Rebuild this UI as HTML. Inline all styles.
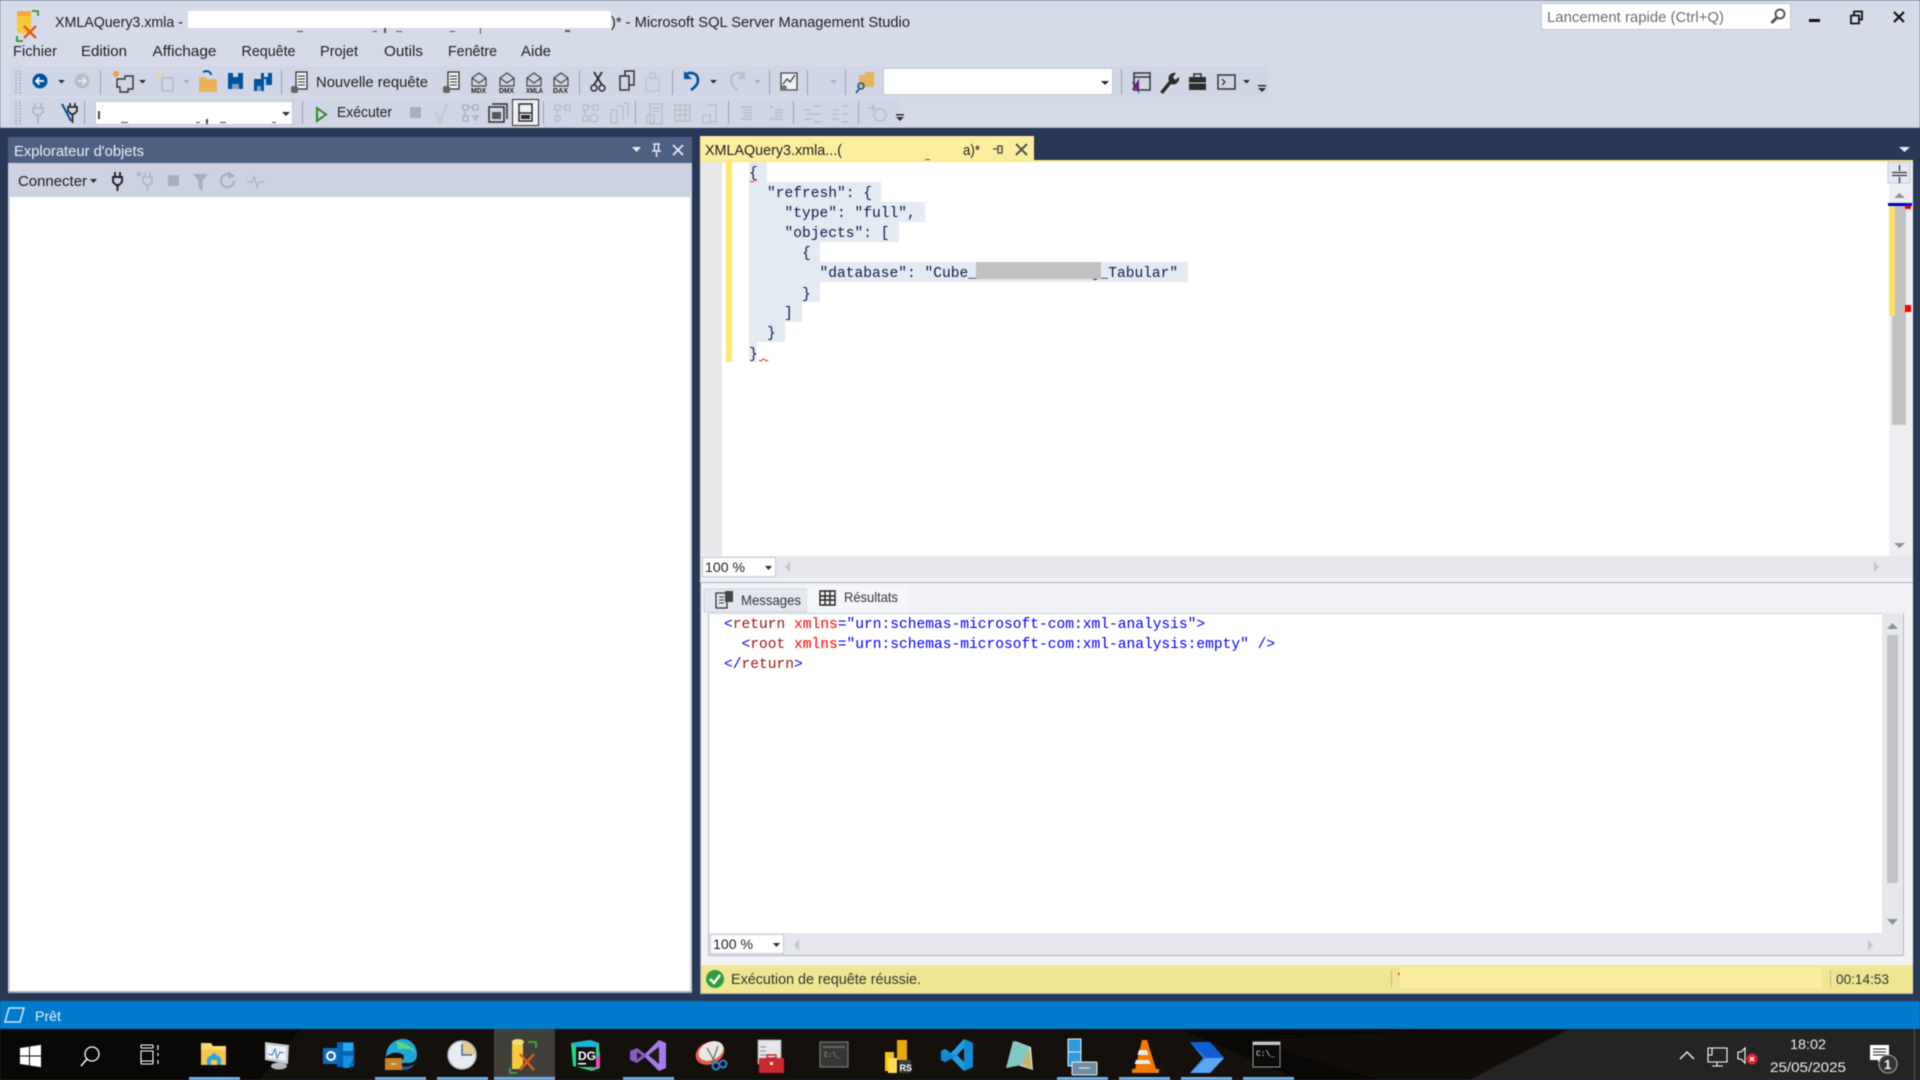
<!DOCTYPE html>
<html lang="fr"><head><meta charset="utf-8"><title>SSMS</title>
<style>
html,body{margin:0;padding:0;width:1920px;height:1080px;overflow:hidden;background:#293955}
#w{position:absolute;left:0;top:0;width:1920px;height:1080px;filter:blur(.45px)}
svg{display:block}
text{font-family:"Liberation Sans",sans-serif;font-size:15px;fill:#1e1e1e;white-space:pre}
.m{font-family:"Liberation Mono",monospace;font-size:14.58px;fill:#15154a}
.x{font-family:"Liberation Mono",monospace;font-size:14.58px;fill:#0000ff}
.g{fill:#a9aebb}.d{fill:#2c2c2c}
</style></head><body><div id="w">
<svg width="1920" height="1080" viewBox="0 0 1920 1080" xmlns="http://www.w3.org/2000/svg">
<!-- chrome -->
<rect width="1920" height="128" fill="#d6dbe9"/>
<rect width="1920" height="1" fill="#b9c1d2"/>
<rect y="127" width="1920" height="1" fill="#b4bccd"/>
<rect x="10" y="66" width="1258" height="30" fill="#d0d6e5"/>
<rect x="10" y="98" width="890" height="28" fill="#d0d6e5"/>
<rect y="128" width="1920" height="873" fill="#293955"/>
<!-- titlebar -->
<path d="M17 11h14v17l-4 5h-8a2 2 0 0 1-2-2z" fill="#f4c93c"/><path d="M17 11h14v5H17z" fill="#f6a93b"/>
<path d="M32 12h6v5M17 37v5h6" fill="none" stroke="#3e9e3e" stroke-width="2" transform="translate(0,-1)"/>
<path d="M24 26l12 12M36 26L24 38" stroke="#e35d12" stroke-width="2.600"/>
<text x="55" y="27" textLength="128" lengthAdjust="spacingAndGlyphs">XMLAQuery3.xmla -</text>
<rect x="188" y="11" width="423" height="17" fill="#fff"/>
<path d="M297 31h6v1h-6zM373 31h4v1h-4zM384 28h2v5h-2zM396 31h6v1h-6zM450 31h5v1h-5zM480 28h1v6h-1zM565 30h5v2h-5z" fill="#555"/>
<text x="611" y="27" textLength="299" lengthAdjust="spacingAndGlyphs">)* - Microsoft SQL Server Management Studio</text>
<rect x="1541.500" y="3.500" width="249" height="26" fill="#fff" stroke="#c3c9d8"/>
<text x="1547" y="22" textLength="177" lengthAdjust="spacingAndGlyphs" style="fill:#6d6d6d">Lancement rapide (Ctrl+Q)</text>
<circle cx="1780" cy="14" r="4.500" fill="none" stroke="#555" stroke-width="2"/><path d="M1776.500 18l-5 5" stroke="#555" stroke-width="3"/>
<rect x="1809" y="19" width="11" height="3" fill="#111"/>
<path d="M1851 15.500h8v8h-8zM1854 15v-3.500h8v8h-3" fill="none" stroke="#111" stroke-width="1.800"/>
<path d="M1894 12l10 10M1904 12l-10 10" stroke="#111" stroke-width="2.200"/>
<!-- menu -->
<text x="13" y="56" textLength="44" lengthAdjust="spacingAndGlyphs">Fichier</text>
<text x="81" y="56" textLength="46" lengthAdjust="spacingAndGlyphs">Edition</text>
<text x="152.500" y="56" textLength="64" lengthAdjust="spacingAndGlyphs">Affichage</text>
<text x="241.500" y="56" textLength="54" lengthAdjust="spacingAndGlyphs">Requête</text>
<text x="320" y="56" textLength="38" lengthAdjust="spacingAndGlyphs">Projet</text>
<text x="384" y="56" textLength="39" lengthAdjust="spacingAndGlyphs">Outils</text>
<text x="448" y="56" textLength="49" lengthAdjust="spacingAndGlyphs">Fenêtre</text>
<text x="521" y="56" textLength="30" lengthAdjust="spacingAndGlyphs">Aide</text>
<!-- toolbar 1 -->
<g fill="none" stroke="#9aa2b5" stroke-width="1.500" stroke-dasharray="1.500 1.500"><path d="M16 71v23M20 71v23M16 102v23M20 102v23"/></g>
<circle cx="40" cy="81" r="7.500" fill="#00539c"/><path d="M44 81h-7M39.500 77.500L36 81l3.500 3.500" fill="none" stroke="#fff" stroke-width="1.800"/>
<path class="d" d="M58 80h7l-3.500 3.500z"/>
<circle cx="82" cy="81" r="7.500" fill="#b9bdc8"/><path d="M78 81h7M82.500 77.500L86 81l-3.500 3.500" fill="none" stroke="#e6e8ee" stroke-width="1.800"/>
<rect x="100" y="70" width="1" height="25" fill="#9aa2b5"/>
<path d="M117 79h8v-3h8v13h-5v3h-8v-5h-3z" fill="none" stroke="#333" stroke-width="1.400"/><circle cx="116" cy="74" r="3" fill="#e8a33c"/>
<path class="d" d="M139 80h7l-3.500 3.500z"/>
<path d="M162 78h11v13h-11z" fill="none" stroke="#b4b9c6" stroke-width="1.500"/><circle cx="159" cy="75" r="3" fill="#e6d5ae"/>
<path class="g" d="M183 80h7l-3.500 3.500z"/>
<path d="M199 77h6l2 2h10v13h-18z" fill="#e9b35b"/><path d="M203 72c5-2 8 0 8 3" fill="none" stroke="#00539c" stroke-width="2"/>
<path d="M228 73h15v16h-15z" fill="#00539c"/><rect x="233" y="73" width="5" height="4" fill="#d6dbe9"/><rect x="232" y="84" width="7" height="5" fill="#7ea2c6"/>
<path d="M254 79h10v12h-10zM261 73h11v12h-6v-6h-5z" fill="#00539c"/><rect x="264" y="73" width="4" height="4" fill="#d6dbe9"/><rect x="257" y="86" width="4" height="5" fill="#7ea2c6"/>
<rect x="281" y="70" width="1" height="25" fill="#9aa2b5"/>
<g><path d="M296 72h11v17h-11z" fill="#f2f3f6" stroke="#333" stroke-width="1.300"/><path d="M298 76h7M298 79h7M298 82h7M298 85h7" stroke="#333"/><rect x="291" y="86" width="7" height="7" rx="2" fill="#666"/></g>
<text x="316" y="87" textLength="112" lengthAdjust="spacingAndGlyphs">Nouvelle requête</text>
<g transform="translate(152,0)"><path d="M296 72h11v17h-11z" fill="#f2f3f6" stroke="#333" stroke-width="1.300"/><path d="M298 76h7M298 79h7M298 82h7M298 85h7" stroke="#333"/><rect x="291" y="86" width="7" height="7" rx="2" fill="#666"/></g>
<g fill="none" stroke="#444" stroke-width="1.200"><path d="M472 78l7-5 7 5v8h-14zM472 78l7 5 7-5"/><path d="M500 78l7-5 7 5v8h-14zM500 78l7 5 7-5"/><path d="M527 78l7-5 7 5v8h-14zM527 78l7 5 7-5"/><path d="M554 78l7-5 7 5v8h-14zM554 78l7 5 7-5"/></g>
<g><text x="471" y="93" textLength="15" lengthAdjust="spacingAndGlyphs" style="font-size:7px;font-weight:bold">MDX</text><text x="499" y="93" textLength="15" lengthAdjust="spacingAndGlyphs" style="font-size:7px;font-weight:bold">DMX</text><text x="526" y="93" textLength="17" lengthAdjust="spacingAndGlyphs" style="font-size:7px;font-weight:bold">XMLA</text><text x="553" y="93" textLength="15" lengthAdjust="spacingAndGlyphs" style="font-size:7px;font-weight:bold">DAX</text></g>
<rect x="579" y="70" width="1" height="25" fill="#9aa2b5"/>
<path d="M594 72l8 13M602 72l-8 13" stroke="#2c2c2c" stroke-width="1.800"/><circle cx="594" cy="88" r="3" fill="none" stroke="#2c2c2c" stroke-width="1.500"/><circle cx="602" cy="88" r="3" fill="none" stroke="#2c2c2c" stroke-width="1.500"/>
<path d="M620 76h9v14h-9zM625 76v-5h9v14h-5" fill="none" stroke="#333" stroke-width="1.500"/>
<path d="M646 78h13v13h-13zM650 78v-5h5v5" fill="none" stroke="#c0c4cf" stroke-width="1.500"/>
<rect x="672" y="70" width="1" height="25" fill="#9aa2b5"/>
<path d="M685 75c5-4 13-2 13 5 0 5-4 8-7 10" fill="none" stroke="#00539c" stroke-width="2.600"/><path d="M684 71v8h8z" fill="#00539c"/>
<path class="d" d="M710 80h7l-3.500 3.500z"/>
<path d="M744 75c-5-4-13-2-13 5 0 5 4 8 7 10" fill="none" stroke="#bcc0cb" stroke-width="2.600"/><path d="M745 71v8h-8z" fill="#bcc0cb"/>
<path class="g" d="M754 80h7l-3.500 3.500z"/>
<rect x="769" y="70" width="1" height="25" fill="#9aa2b5"/>
<path d="M781 73h16v17h-16z" fill="#eef0f5" stroke="#444" stroke-width="1.300"/><path d="M783 84l4-5 3 3 5-7" fill="none" stroke="#444" stroke-width="1.300"/><circle cx="784" cy="88" r="3" fill="#777"/>
<rect x="807" y="70" width="1" height="25" fill="#9aa2b5"/>
<path class="g" d="M830 80h7l-3.500 3.500z"/>
<rect x="845" y="70" width="1" height="25" fill="#9aa2b5"/>
<path d="M859 75h6v-3h9v15h-15z" fill="#e9b35b"/><circle cx="861" cy="86" r="3" fill="none" stroke="#00539c" stroke-width="1.500"/><path d="M859 89l-3 4" stroke="#00539c" stroke-width="1.600"/>
<rect x="883.500" y="68.500" width="229" height="26" fill="#fff" stroke="#c3c9d8"/>
<path class="d" d="M1101 81h8l-4 4z"/>
<rect x="1121" y="69" width="1" height="26" fill="#9aa2b5"/>
<path d="M1134 73h16v17h-16zM1134 77h16" fill="none" stroke="#333" stroke-width="1.500"/><path d="M1133 82l5 8v-8l-5 8" fill="none" stroke="#68217a" stroke-width="2.200"/>
<path d="M1160 92l9-11c-2-5 2-9 7-8l-3 4 2 3 4-3c1 5-4 9-8 7l-8 10z" fill="#2c2c2c"/>
<path d="M1189 77h17v13h-17z" fill="#2c2c2c"/><path d="M1194 77v-3h7v3" fill="none" stroke="#2c2c2c" stroke-width="1.500"/><path d="M1189 83h17" stroke="#d0d6e5"/>
<path d="M1218 75h17v14h-17z" fill="none" stroke="#333" stroke-width="1.500"/><path d="M1222 79l3 3-3 3" fill="none" stroke="#333" stroke-width="1.300"/>
<path class="d" d="M1243 80h7l-3.500 3.500z"/>
<path class="d" d="M1258 85h8v1.500h-8zM1258 88h8l-4 4z"/>
<!-- toolbar 2 -->
<path d="M35 103v5M41 103v5M33 108h10v4l-3 3h-4l-3-3zM38 115v9" fill="none" stroke="#b0b5c2" stroke-width="1.800"/>
<path d="M62 104l9 17" stroke="#00539c" stroke-width="2"/><path d="M70 103v4M75 103v4M68 107h9v4l-3 3h-3l-3-3zM72.500 114v9" fill="none" stroke="#2c2c2c" stroke-width="1.800"/>
<rect x="84" y="101" width="1" height="23" fill="#9aa2b5"/>
<rect x="95.500" y="101.500" width="197" height="23" fill="#fff" stroke="#c3c9d8"/>
<path d="M98 111h2v8h-2zM121 122h7v1h-7zM196 122h4v1h-4zM206 119h2v5h-2zM220 122h6v1h-6zM272 122h4v1h-4z" fill="#444"/>
<path class="d" d="M282 112h8l-4 4z"/>
<rect x="302" y="101" width="1" height="23" fill="#9aa2b5"/>
<path d="M317 108l9 6.500-9 6.500z" fill="none" stroke="#2e8b2e" stroke-width="2"/>
<text x="337" y="117" textLength="55" lengthAdjust="spacingAndGlyphs">Exécuter</text>
<rect x="410" y="107" width="11" height="11" fill="#a9aebb"/>
<path d="M435 112l5 9 7-17" fill="none" stroke="#c4c8d2" stroke-width="2.600"/>
<g fill="none" stroke="#a9aebb" stroke-width="1.300"><path d="M463 105h5v5h-5zM473 105h5v5h-5zM463 116h5v5h-5zM468 107h5M465 110v6"/><path d="M473 116h5l-2.500 4z"/></g>
<path d="M489 107h15v15h-15zM492 104h15v15" fill="#d0d6e5" stroke="#2c2c2c" stroke-width="1.500"/><path d="M492 112h9v7h-9z" fill="#2c2c2c" opacity=".75"/>
<rect x="512.500" y="99.500" width="26" height="26" fill="#eef0f5" stroke="#2c2c2c"/>
<path d="M519 104h13v17h-13zM519 113h13" fill="none" stroke="#2c2c2c" stroke-width="1.500"/><path d="M521 115h9v4h-9z" fill="#2c2c2c"/>
<rect x="543" y="101" width="1" height="23" fill="#9aa2b5"/>
<g fill="none" stroke="#b9bdc8" stroke-width="1.300"><path d="M555 105h5v5h-5zM565 105h5v5h-5zM555 116h5v5h-5zM560 107h5M557 110v6"/><path d="M583 105h5v5h-5zM593 105h5v5h-5zM583 116h5v5h-5zM588 107h5M585 110v6"/><circle cx="594" cy="118" r="4"/><path d="M611 110h6v13h-6zM617 106h6v14M623 103h5v14"/></g>
<rect x="635" y="101" width="1" height="23" fill="#9aa2b5"/>
<g fill="none" stroke="#b9bdc8" stroke-width="1.300"><path d="M650 104h12v20h-12zM647 115h7v8h-7zM652 108h8M652 111h8"/><path d="M675 105h15v16h-15zM675 110h15M675 115h15M680 105v16M685 105v16"/><path d="M703 115h7v8h-7zM707 105h9v17h-6M712 105v-1"/></g>
<rect x="728" y="101" width="1" height="23" fill="#9aa2b5"/>
<g stroke="#b9bdc8" stroke-width="1.400" fill="none"><path d="M741 107h11M743 110h9M743 113h9M743 116h9M741 119h11"/><path d="M770 107h3M775 110h8M775 113h8M775 116h8M770 119h13"/></g>
<rect x="793" y="101" width="1" height="23" fill="#9aa2b5"/>
<g stroke="#b9bdc8" stroke-width="1.400" fill="none"><path d="M804 110h7M804 119h7M814 106h7M814 114h7M814 122h7M811 114h7M806 114h5"/><path d="M832 110h7M832 119h7M842 106h7M842 114h7M842 122h7M832 114h6"/></g>
<rect x="858" y="101" width="1" height="23" fill="#9aa2b5"/>
<circle cx="880" cy="115" r="6" fill="none" stroke="#b9bdc8" stroke-width="1.500"/><path d="M868 108h7M872 105l3 3-3 3" fill="none" stroke="#b9bdc8" stroke-width="1.500"/>
<path class="d" d="M896 114h8v1.500h-8zM896 117h8l-4 4z"/>
<!-- object explorer -->
<rect x="8" y="137" width="684" height="26" fill="#4d6082"/>
<rect x="8" y="163" width="684" height="34" fill="#ccd2e2"/>
<rect x="8" y="197" width="684" height="794" fill="#fff"/>
<rect x="8" y="991" width="684" height="2" fill="#a9b1c4"/>
<rect x="8" y="197" width="2" height="794" fill="#ccd2e2"/>
<rect x="690" y="197" width="2" height="794" fill="#ccd2e2"/>
<text x="14" y="156" textLength="130" lengthAdjust="spacingAndGlyphs" style="fill:#eef1f6">Explorateur d'objets</text>
<path d="M632 147h9l-4.500 5z" fill="#e8ecf4"/>
<path d="M653 144h7M654.500 144v7M658.500 144v7M652 151h9M656.500 151v6" stroke="#e8ecf4" stroke-width="1.400" fill="none"/>
<path d="M673 145l10 10M683 145l-10 10" stroke="#e8ecf4" stroke-width="1.700"/>
<text x="18" y="186" textLength="69" lengthAdjust="spacingAndGlyphs">Connecter</text>
<path class="d" d="M90 179h7l-3.500 4z"/>
<path d="M115 172v5M120 172v5M113 177h9v5l-3 3h-3l-3-3zM117.500 185v6" fill="none" stroke="#222" stroke-width="1.900"/>
<path d="M137 172l4 4M141 172l-4 4M145 172v5M150 172v5M143 177h9v5l-3 3h-3l-3-3zM147.500 185v6" fill="none" stroke="#b0b5c2" stroke-width="1.700"/>
<rect x="168" y="175" width="11" height="11" fill="#a9aebb"/>
<path class="g" d="M193 174h15l-5.500 7v10l-4-3v-7z"/>
<path d="M232 176a6.500 6.500 0 1 0 2 5" fill="none" stroke="#a9aebb" stroke-width="2.200"/><path class="g" d="M228 171l7 5-7 3z"/>
<path d="M247 182h5l2-5 3 10 2-5h5" fill="none" stroke="#b0b5c2" stroke-width="1.400"/>
<!-- editor tab strip -->
<rect x="700" y="136" width="334" height="24" fill="#fdee9f"/>
<rect x="700" y="160" width="1213" height="2" fill="#fbe98b"/>
<text x="705" y="155" textLength="137" lengthAdjust="spacingAndGlyphs">XMLAQuery3.xmla...(</text>
<text x="963" y="155" textLength="17" lengthAdjust="spacingAndGlyphs">a)*</text>
<path d="M925 159h5v1h-5z" fill="#555"/>
<path d="M993 149h5M998 146v7h4v-7zM1002 149h1" stroke="#444" stroke-width="1.300" fill="none"/>
<path d="M1016 144l11 11M1027 144l-11 11" stroke="#555" stroke-width="2"/>
<path d="M1899 147h11l-5.500 5z" fill="#e8ecf4"/>
<!-- editor -->
<rect x="700" y="162" width="1213" height="394" fill="#fff"/>
<rect x="700" y="162" width="22" height="394" fill="#e8e8ea"/>
<rect x="726" y="162" width="6" height="200" fill="#fbe96e"/>
<g fill="#e4eaf2"><rect x="749" y="162" width="18" height="20"/><rect x="749" y="182" width="132" height="20"/><rect x="749" y="202" width="176" height="20"/><rect x="749" y="222" width="150" height="20"/><rect x="749" y="242" width="71" height="20"/><rect x="749" y="262" width="439" height="20"/><rect x="749" y="282" width="71" height="20"/><rect x="749" y="302" width="53" height="20"/><rect x="749" y="322" width="36" height="20"/><rect x="749" y="342" width="8" height="20"/></g>
<text class="m" x="749" y="177">{</text>
<text class="m" x="767" y="197">"refresh": {</text>
<text class="m" x="784.500" y="217">"type": "full",</text>
<text class="m" x="784.500" y="237">"objects": [</text>
<text class="m" x="802" y="257">{</text>
<text class="m" x="819.500" y="277">"database": "Cube_xxxx_xxxxxxxxg_Tabular"</text>
<text class="m" x="802" y="298">}</text>
<text class="m" x="784" y="317">]</text>
<text class="m" x="767" y="337">}</text>
<text class="m" x="749" y="358">}</text>
<rect x="976" y="262" width="125" height="17" fill="#c1c1c1"/>
<path d="M750 181q2 2 4 0t3 0" fill="none" stroke="#e8483c" stroke-width="1.200"/>
<path d="M759 360q2 2 3 0t3 0t3 0" fill="none" stroke="#e8483c" stroke-width="1.200"/>
<!-- editor scrollbar -->
<rect x="1889" y="162" width="24" height="394" fill="#eeeef2"/>
<rect x="1888" y="162" width="22" height="21" fill="#e4e8f2" stroke="#c6ccda" stroke-width="1"/>
<path d="M1892 172.500h15M1892 175.500h15M1899.500 165v6M1899.500 177v6" stroke="#333" stroke-width="1.300"/>
<path d="M1894 198l5.500-5 5.500 5z" fill="#8d919b"/>
<rect x="1892" y="206" width="14" height="219" fill="#c2c2c2"/>
<rect x="1889" y="206" width="6" height="110" fill="#fbe06a"/>
<rect x="1888" y="203" width="24" height="3" fill="#0000c8"/>
<rect x="1905" y="206" width="6" height="3" fill="#f00"/>
<rect x="1905" y="305" width="6" height="7" fill="#f00"/>
<path d="M1894 543l5.500 5 5.500-5z" fill="#8d919b"/>
<!-- editor hscroll -->
<rect x="700" y="556" width="1213" height="22" fill="#e6e7ed"/>
<rect x="702.500" y="557.500" width="73" height="19" fill="#fff" stroke="#c3c9d8"/>
<text x="705" y="572" textLength="40" lengthAdjust="spacingAndGlyphs" style="font-size:14px">100 %</text>
<path class="d" d="M765 566h7l-3.500 4z"/>
<path d="M790 561l-5 6 5 6z" fill="#c4c7d0"/>
<path d="M1874 561l5 6-5 6z" fill="#c4c7d0"/>
<rect x="700" y="578" width="1213" height="5" fill="#f0f1f4"/>
<rect x="700" y="582" width="1213" height="1" fill="#a9aebc"/>
<!-- results pane -->
<rect x="700" y="583" width="1213" height="382" fill="#f1f2f6"/>
<rect x="704" y="589" width="103" height="23" fill="#e4e7ef" stroke="#cfd3de"/>
<rect x="807" y="586" width="102" height="27" fill="#f5f6f9"/>
<path d="M716 593h11v15h-11z" fill="none" stroke="#333" stroke-width="1.300"/><path d="M719 597h5M719 600h5M719 603h5" stroke="#333"/><rect x="725" y="591" width="8" height="11" fill="#444"/>
<text x="741" y="605" textLength="60" lengthAdjust="spacingAndGlyphs" style="font-size:14px;fill:#333">Messages</text>
<path d="M820 591h15v14h-15zM820 596h15M820 600h15M825 591v14M830 591v14" fill="none" stroke="#222" stroke-width="1.400"/>
<text x="844" y="602" textLength="54" lengthAdjust="spacingAndGlyphs" style="font-size:14px;fill:#333">Résultats</text>
<rect x="709" y="613" width="1173" height="320" fill="#fff"/>
<rect x="708" y="613" width="1" height="342" fill="#b4b9c8"/>
<rect x="708" y="613" width="1195" height="1" fill="#cdd1dc"/>
<text class="x" x="724" y="628">&lt;<tspan style="fill:#a31515">return</tspan> <tspan style="fill:#ff0000">xmlns</tspan>="urn:schemas-microsoft-com:xml-analysis"&gt;</text>
<text class="x" x="741.500" y="648">&lt;<tspan style="fill:#a31515">root</tspan> <tspan style="fill:#ff0000">xmlns</tspan>="urn:schemas-microsoft-com:xml-analysis:empty" /&gt;</text>
<text class="x" x="724" y="668">&lt;/<tspan style="fill:#a31515">return</tspan>&gt;</text>
<!-- results scrollbars -->
<rect x="1882" y="613" width="21" height="342" fill="#e6e7ed"/>
<path d="M1887 629l5.500-6 5.500 6z" fill="#8d919b"/>
<rect x="1887" y="635" width="11" height="248" fill="#c2c3c9"/>
<path d="M1887 919l5.500 6 5.500-6z" fill="#8d919b"/>
<rect x="709" y="933" width="1194" height="22" fill="#e6e7ed"/>
<rect x="710.500" y="934.500" width="73" height="19" fill="#fff" stroke="#c3c9d8"/>
<text x="713" y="949" textLength="40" lengthAdjust="spacingAndGlyphs" style="font-size:14px">100 %</text>
<path class="d" d="M773 943h7l-3.500 4z"/>
<path d="M799 939l-5 6 5 6z" fill="#c4c7d0"/>
<path d="M1868 939l5 6-5 6z" fill="#c4c7d0"/>
<rect x="708" y="955" width="1195" height="1" fill="#a9aebc"/>
<rect x="1903" y="613" width="1" height="343" fill="#b4b9c8"/>
<!-- exec status -->
<rect x="700" y="965" width="1213" height="28" fill="#efe592"/>
<rect x="700" y="993" width="1213" height="1" fill="#b5b8c4"/>
<rect x="700" y="583" width="1" height="410" fill="#8c97ad"/>
<circle cx="715" cy="979" r="9" fill="#2f9e41"/><path d="M710 979l4 4 6-8" fill="none" stroke="#fff" stroke-width="2.400"/>
<text x="731" y="984" textLength="190" lengthAdjust="spacingAndGlyphs" style="font-size:14.500px;fill:#333">Exécution de requête réussie.</text>
<rect x="1400" y="968" width="422" height="20" fill="#fbeba1"/>
<rect x="1391" y="970" width="1" height="17" fill="#b9b8a0"/><rect x="1830" y="970" width="1" height="17" fill="#b9b8a0"/>
<rect x="1398" y="973" width="1.500" height="2" fill="#b33"/>
<text x="1836" y="984" textLength="53" lengthAdjust="spacingAndGlyphs" style="font-size:14px;fill:#333">00:14:53</text>
<!-- status bar -->
<rect y="1001" width="1920" height="28" fill="#007acc"/>
<path d="M9 1008h15l-4 14H5z" fill="none" stroke="#cfe6f6" stroke-width="1.500"/>
<text x="35" y="1021" textLength="26" lengthAdjust="spacingAndGlyphs" style="fill:#e4f2fb;font-size:14px">Prêt</text>
<!-- taskbar -->
<rect y="1029" width="1920" height="51" fill="#242424"/>
<path d="M0 1029h1569l-100 51H0z" fill="#0a0806"/>
<path d="M300 1029h880l120 51H260z" fill="#14100b"/>
<path d="M1250 1040l200-11h119l-100 51h-90z" fill="#110d09"/>
<rect x="494" y="1029" width="61" height="51" fill="#413f3a"/>
<g fill="#70b3ea"><rect x="189" y="1077" width="51" height="3"/><rect x="375" y="1077" width="51" height="3"/><rect x="437" y="1077" width="51" height="3"/><rect x="494" y="1077" width="61" height="3"/><rect x="623" y="1077" width="51" height="3"/><rect x="1057" y="1077" width="51" height="3"/><rect x="1119" y="1077" width="51" height="3"/><rect x="1181" y="1077" width="51" height="3"/><rect x="1243" y="1077" width="51" height="3"/></g>
<path d="M20 1048l9-1.300v8.800h-9zM30 1046.500l11-1.600v10.600H30zM20 1056.500h9v8.800l-9-1.300zM30 1056.500h11v10.600l-11-1.600z" fill="#fff"/>
<circle cx="92" cy="1054" r="7" fill="none" stroke="#fff" stroke-width="1.300"/><path d="M87 1059l-6 7" stroke="#fff" stroke-width="1.400"/>
<path d="M141 1045h12M141 1048h12M141 1051h12v10h-12zM141 1064h12M141 1060v4M153 1060v4M141 1045v3M153 1045v3M158 1045v5M158 1053v3M158 1060v4" fill="none" stroke="#fff" stroke-width="1.100"/>
<path d="M201 1043h10l2 3h13v19h-25z" fill="#fcd96b"/><path d="M201 1050h25v15h-25z" fill="#f6c64b"/><path d="M207 1065v-7l7-5 7 5v7h-4v-5h-6v5z" fill="#2ca4e0"/>
<path d="M265 1042l24 3-1 19-23-4z" fill="#c9cbcf"/><path d="M267 1045l19 2v14l-19-3z" fill="#eef2f6"/><path d="M268 1054l4 1 3-6 2 9 3-6 4 1" fill="none" stroke="#3a7ab8" stroke-width="1"/><ellipse cx="279" cy="1066" rx="8" ry="3.500" fill="#b5b7bb"/>
<rect x="337" y="1042" width="17" height="25" fill="#0364b8"/><rect x="343" y="1043" width="10" height="8" fill="#28a8ea"/><path d="M343 1056h11l-5 12h-6z" fill="#1490df"/><rect x="323" y="1048" width="16" height="16" fill="#0f6cbd"/><circle cx="331" cy="1056" r="4" fill="none" stroke="#fff" stroke-width="2"/>
<path d="M386 1057c0-13 10-18 17-18 9 0 14 8 14 16 0 5-4 8-8 8h-10c3-2 5-4 5-7-1-3-12-6-18 1z" fill="#1ea7d8"/><path d="M396 1041c6 1 18 5 20 13-3-5-12-7-17-4z" fill="#5bd37c"/><rect x="385" y="1058" width="17" height="12" fill="#c8802a"/><rect x="391" y="1063" width="5" height="2" fill="#f2c46a"/><path d="M402 1070c6 0 10-2 13-6-6 3-9 3-13 2z" fill="#1463a8"/>
<circle cx="462" cy="1055" r="14" fill="#e8ecf1"/><path d="M462 1055v-14a14 14 0 0 1 14 14z" fill="#e6c98c"/><circle cx="462" cy="1055" r="14" fill="none" stroke="#b6bcc6" stroke-width="1.500"/><path d="M462 1044v11h10" fill="none" stroke="#3d6fb0" stroke-width="1.500"/>
<path d="M512 1042h11v22l-4 5h-7z" fill="#f4c93c"/><path d="M512 1042a6 3 0 0 1 12 0 6 3 0 0 1-12 0" fill="#f7dc7a"/>
<path d="M528 1042h8v6M510 1068v5h7" fill="none" stroke="#3e9e3e" stroke-width="2"/>
<path d="M520 1054l14 16M534 1054l-14 16" stroke="#e35d12" stroke-width="2.400"/>
<path d="M571 1043l19-3 9 3 1 25-8 3-19-5z" fill="#21d789"/><path d="M571 1043l19-3 9 3-8 14z" fill="#1ab3d6"/><path d="M590 1070l10-4v-14z" fill="#ee4bc0"/><rect x="576" y="1047" width="20" height="20" fill="#111"/>
<text x="578" y="1060" style="fill:#fff;font-size:12px;font-weight:bold">DG</text><rect x="578" y="1063" width="8" height="1.500" fill="#fff"/>
<path d="M637 1048l8 6 14-14 7 3v25l-7 3-14-14-8 6-7-3v-9z" fill="#865ac9"/><path d="M659 1047v17l-11-8.500zM637 1052l5 3.500-5 4z" fill="#1b1b1b"/><path d="M645 1054l14-14 7 3v25l-7 3-14-14 3-2 11 9v-18l-11 9z" fill="#a97be6"/>
<ellipse cx="710" cy="1053" rx="15" ry="11" transform="rotate(-25 710 1053)" fill="#e85a50"/><ellipse cx="711" cy="1051" rx="13" ry="9" transform="rotate(-25 711 1051)" fill="#e7e7e4"/><path d="M707 1048l8 14M718 1046l-6 17" stroke="#666" stroke-width="1.200"/><circle cx="716" cy="1066" r="3.500" fill="none" stroke="#3282d2" stroke-width="2"/><circle cx="723" cy="1064" r="3.500" fill="none" stroke="#3282d2" stroke-width="2"/>
<rect x="758" y="1040" width="23" height="24" fill="#e4e6ea" stroke="#999"/><path d="M760 1047h6M760 1051h6M760 1055h6" stroke="#888"/><rect x="759" y="1058" width="25" height="15" rx="1" fill="#c9292d"/><rect x="767" y="1055" width="9" height="3" fill="none" stroke="#c9292d" stroke-width="1.500"/><rect x="770" y="1062" width="3" height="3" fill="#eee"/>
<rect x="820" y="1042" width="28" height="25" fill="#363636" stroke="#777" stroke-width="1.200"/><path d="M823 1047h22" stroke="#666" stroke-width="2"/><text x="824" y="1057" style="fill:#aaa;font-size:7px;font-family:'Liberation Mono',monospace">C:\_</text>
<rect x="885" y="1052" width="9" height="19" fill="#f2c811"/><rect x="897" y="1040" width="10" height="20" fill="#e8a80c"/><rect x="899" y="1060" width="12" height="13" rx="1" fill="#3c3c3c"/><text x="899.500" y="1071" style="fill:#fff;font-size:9px;font-weight:bold">RS</text><rect x="888" y="1058" width="9" height="15" fill="#ffdb4d"/>
<path d="M964 1039l9 4v24l-9 4-13-13-6 4-4-2v-9l4-2 6 4zM964 1048l-7 7 7 7z" fill="#1fa1e6"/><path d="M964 1039l9 4v24l-9 4zM945 1050l12 6-12 7-4-3v-8z" fill="#0a78c0" opacity=".55"/>
<path d="M1015 1041l16 6 2 23-16-5-11 3 3-3z" fill="#d6dfe2"/><path d="M1013 1041l16 6-7 18-16 3z" fill="#7fc9c2"/><path d="M1029 1047l3 22-10-4z" fill="#c7b26a"/>
<rect x="1068" y="1039" width="13" height="13" fill="#2f9ae0" stroke="#eee"/><rect x="1068" y="1052" width="13" height="14" fill="#2f9ae0" stroke="#eee"/><rect x="1072" y="1062" width="25" height="13" rx="1" fill="#6f8fa5" stroke="#eee"/><path d="M1079 1068h11" stroke="#eee"/>
<path d="M1142 1040l5 0 9 29h3v4h-27v-4h3z" fill="#f57c00"/><path d="M1139 1050h8l1.500 5h-11zM1136 1060h13l1.500 4h-16z" fill="#ececec"/>
<path d="M1190 1042h20l14 16-14 15h-20l13-15z" fill="#2b7fe6"/><path d="M1190 1042h20l14 16h-18z" fill="#0f5ed2"/><path d="M1224 1058l-14 15h-20l16-15z" fill="#5ba5f5"/>
<rect x="1253" y="1042" width="27" height="25" fill="#0b0b0b" stroke="#999"/><rect x="1253" y="1042" width="27" height="3" fill="#c8c8c8"/><text x="1256" y="1056" style="fill:#e8e8e8;font-size:8px;font-family:'Liberation Mono',monospace">C:\_</text>
<!-- tray -->
<path d="M1680 1059l7-7 7 7" fill="none" stroke="#fff" stroke-width="1.300"/>
<path d="M1708 1048h19v14h-19zM1712 1048v7h-4M1717 1062v4M1712 1066h11" fill="none" stroke="#fff" stroke-width="1.100"/>
<path d="M1738 1052h3l4-4v15l-4-4h-3z" fill="none" stroke="#fff" stroke-width="1.100"/>
<circle cx="1752" cy="1059" r="5.500" fill="#e02030"/><path d="M1750 1057l4 4M1754 1057l-4 4" stroke="#fff" stroke-width="1.300"/>
<text x="1790" y="1049" textLength="36" lengthAdjust="spacingAndGlyphs" style="fill:#eee;font-size:14px">18:02</text>
<text x="1770" y="1072" textLength="76" lengthAdjust="spacingAndGlyphs" style="fill:#eee;font-size:14px">25/05/2025</text>
<path d="M1870 1045h19v15h-8l-3 2v-2h-8z" fill="#fff"/><path d="M1873 1049h13M1873 1052h13M1873 1055h13" stroke="#242424" stroke-width="1.100"/>
<circle cx="1888" cy="1064" r="9" fill="#333" stroke="#aaa"/><text x="1884" y="1069" style="fill:#fff;font-size:13px;font-weight:bold">1</text>
<rect x="1914" y="1029" width="1" height="51" fill="#5a5a5a"/>
</svg>
</div></body></html>
